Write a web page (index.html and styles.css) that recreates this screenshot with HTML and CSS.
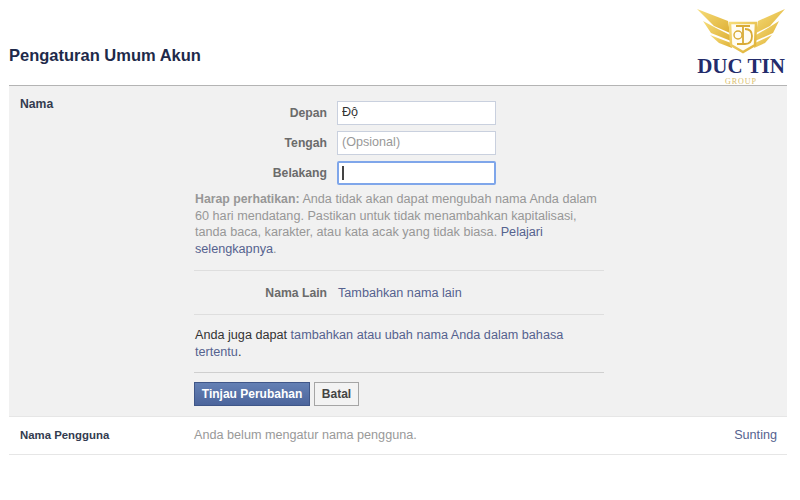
FILE: index.html
```html
<!DOCTYPE html>
<html lang="id">
<head>
    <meta charset="UTF-8">
    <meta name="viewport" content="width=device-width, initial-scale=1.0">
    <title>Pengaturan Umum Akun</title>
    <link rel="stylesheet" href="styles.css">
</head>
<body>
    <div class="logo">
        <svg class="logo-mark" width="90" height="48" viewBox="0 0 90 48">
            <defs>
                <linearGradient id="gold" x1="0" y1="0" x2="1" y2="1">
                    <stop offset="0" stop-color="#f6dc78"/>
                    <stop offset="1" stop-color="#deb036"/>
                </linearGradient>
            </defs>
            <path d="M1 1 L32 13 L34 25 L18 18 Z" fill="url(#gold)"/>
            <path d="M7 13 L20 20 L34 27 L35 33 L15 25 Z" fill="url(#gold)"/>
            <path d="M14 27 L35 35 L36 40 L23 35 Z" fill="url(#gold)"/>
            <path d="M89 1 L62 13 L60 25 L74 18 Z" fill="url(#gold)"/>
            <path d="M83 13 L72 20 L60 27 L59 33 L77 25 Z" fill="url(#gold)"/>
            <path d="M76 27 L59 35 L58 40 L69 35 Z" fill="url(#gold)"/>
            <path d="M34 15 H60 L59 37 L47 44 L35 37 Z" fill="#fffdf3" stroke="url(#gold)" stroke-width="2.5"/>
            <path d="M40 18 H54 M47 18 V36 M41 36 H49 Q56 36 56 28 Q56 21 49 21" fill="none" stroke="#d9ab35" stroke-width="1.8"/>
            <circle cx="42" cy="27" r="4" fill="none" stroke="#d9ab35" stroke-width="1.4"/>
        </svg>
        <div class="logo-name">DUC TIN</div>
        <div class="logo-group">GROUP</div>
    </div>

    <div class="page">
        <div class="page-header">
            <h1>Pengaturan Umum Akun</h1>
        </div>

        <div class="panel">
            <div class="row-title">Nama</div>
            <div class="panel-body">
                <div class="field">
                    <label for="depan">Depan</label>
                    <input type="text" id="depan" value="Độ">
                </div>
                <div class="field">
                    <label for="tengah">Tengah</label>
                    <input type="text" id="tengah" placeholder="(Opsional)">
                </div>
                <div class="field">
                    <label for="belakang">Belakang</label>
                    <div class="input-focus" id="belakang"><span class="caret"></span></div>
                </div>

                <p class="note"><b>Harap perhatikan:</b> Anda tidak akan dapat mengubah nama Anda dalam 60 hari mendatang. Pastikan untuk tidak menambahkan kapitalisasi, tanda baca, karakter, atau kata acak yang tidak biasa. <a href="#">Pelajari selengkapnya</a>.</p>

                <div class="other-name">
                    <span class="label">Nama Lain</span>
                    <a href="#">Tambahkan nama lain</a>
                </div>

                <p class="lang-note">Anda juga dapat <a href="#">tambahkan atau ubah nama Anda dalam bahasa tertentu</a>.</p>

                <div class="actions">
                    <button class="btn-primary">Tinjau Perubahan</button>
                    <button class="btn-cancel">Batal</button>
                </div>
            </div>
        </div>

        <div class="user-row">
            <div class="user-title">Nama Pengguna</div>
            <div class="user-text">Anda belum mengatur nama pengguna.</div>
            <a href="#" class="edit">Sunting</a>
        </div>
    </div>
</body>
</html>
```

FILE: styles.css
```css
body {
    font-family: "Liberation Sans", Arial, sans-serif;
    font-size: 12.65px;
    background-color: #fff;
    color: #333;
    margin: 0;
}
a {
    color: #55628f;
    text-decoration: none;
}
.page {
    margin: 0 13px 0 9px;
}
.page-header {
    height: 86px;
    box-sizing: border-box;
    padding-top: 45px;
    border-bottom: 1px solid #b4b4b4;
}
h1 {
    margin: 0;
    font-size: 16.5px;
    line-height: 20px;
    color: #1e2a4a;
}
.panel {
    display: flex;
    height: 331px;
    box-sizing: border-box;
    background-color: #f1f1f1;
    border-bottom: 1px solid #e6e6e6;
}
.row-title {
    width: 185px;
    box-sizing: border-box;
    padding: 11px 0 0 11px;
    font-size: 12.2px;
    font-weight: bold;
    line-height: 14px;
    color: #333b4f;
}
.panel-body {
    width: 410px;
    padding-top: 15px;
}
.field {
    display: flex;
    align-items: center;
    height: 24px;
    margin-bottom: 6px;
}
.field label,
.label {
    width: 133px;
    margin-right: 10px;
    text-align: right;
    font-size: 12.2px;
    font-weight: bold;
    color: #6b6b6b;
}
.field input,
.input-focus {
    width: 159px;
    height: 24px;
    box-sizing: border-box;
    padding: 0 4px 2px;
    font-family: inherit;
    font-size: 12.6px;
    color: #333;
    background-color: #fff;
    border: 1px solid #c9d0de;
    outline: none;
}
.field input::placeholder {
    color: #999;
}
.input-focus {
    display: flex;
    align-items: center;
    padding: 0 3px;
    border: 2px solid #7fa6ea;
    border-radius: 2px;
}
.caret {
    width: 2px;
    height: 14px;
    background-color: #444;
}
.note {
    margin: 0;
    padding-left: 1px;
    line-height: 16.7px;
    color: #979797;
}
.note b {
    font-size: 12.3px;
}
.other-name {
    display: flex;
    align-items: center;
    height: 45px;
    box-sizing: border-box;
    margin-top: 12px;
    padding-top: 1px;
    border-top: 1px solid #dedede;
    border-bottom: 1px solid #dedede;
}
.other-name a {
    margin-left: 1px;
}
.lang-note {
    margin: 0;
    padding: 12px 0 12px 1px;
    line-height: 16.7px;
    color: #333;
    border-bottom: 1px solid #cfcfcf;
}
.actions {
    display: flex;
    gap: 4px;
    margin-top: 9px;
}
.actions button {
    height: 24px;
    font-family: inherit;
    font-size: 12px;
    font-weight: bold;
    padding: 0;
    cursor: pointer;
}
.btn-primary {
    width: 116px;
    color: #fff;
    background: linear-gradient(#6480b4, #4c659c);
    border: 1px solid #3f5688;
}
.btn-cancel {
    width: 45px;
    color: #444;
    background-color: #f3f3f3;
    border: 1px solid #a5a5a5;
}
.user-row {
    display: flex;
    align-items: center;
    height: 38px;
    box-sizing: border-box;
    padding-bottom: 2px;
    border-bottom: 1px solid #e6e6e6;
}
.user-title {
    width: 185px;
    box-sizing: border-box;
    padding-left: 11px;
    font-size: 11.4px;
    font-weight: bold;
    color: #333b4f;
}
.user-text {
    flex: 1;
    color: #999;
}
.edit {
    margin-right: 10px;
}
.logo {
    position: absolute;
    top: 8px;
    left: 696px;
    width: 90px;
    text-align: center;
}
.logo-mark {
    display: block;
}
.logo-name {
    margin-top: -2px;
    font-family: "Liberation Serif", serif;
    font-size: 21px;
    font-weight: bold;
    line-height: 24px;
    color: #232c6b;
    white-space: nowrap;
}
.logo-group {
    font-family: "Liberation Serif", serif;
    font-size: 8px;
    line-height: 7px;
    letter-spacing: 1px;
    color: #d9bd6c;
}
```
